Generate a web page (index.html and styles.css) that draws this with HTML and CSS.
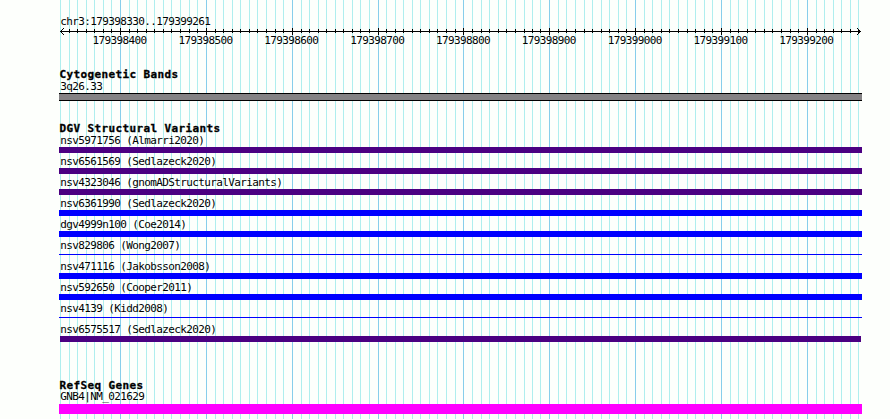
FILE: index.html
```
<!DOCTYPE html>
<html lang="en">
<head>
    <meta charset="UTF-8">
    <title>chr3:179398330..179399261</title>
    <link rel="stylesheet" href="styles.css">
</head>
<body>
    <div class="browser">
        <svg class="grid" id="grid" width="890" height="419" shape-rendering="crispEdges"></svg>

        <div class="ruler">
            <div class="label">chr3:179398330..179399261</div>
            <svg class="axis" id="axis" width="890" height="8" shape-rendering="crispEdges"></svg>
            <div class="numbers">
                <span>179398400</span>
                <span>179398500</span>
                <span>179398600</span>
                <span>179398700</span>
                <span>179398800</span>
                <span>179398900</span>
                <span>179399000</span>
                <span>179399100</span>
                <span>179399200</span>
            </div>
        </div>

        <div class="track cytobands">
            <h2>Cytogenetic Bands</h2>
            <div class="label">3q26.33</div>
            <div class="band"></div>
        </div>

        <div class="track variants">
            <h2>DGV Structural Variants</h2>
            <div class="feature"><div class="label">nsv5971756 (Almarri2020)</div><div class="bar complex"></div></div>
            <div class="feature"><div class="label">nsv6561569 (Sedlazeck2020)</div><div class="bar complex"></div></div>
            <div class="feature"><div class="label">nsv4323046 (gnomADStructuralVariants)</div><div class="bar complex"></div></div>
            <div class="feature"><div class="label">nsv6361990 (Sedlazeck2020)</div><div class="bar gain"></div></div>
            <div class="feature"><div class="label">dgv4999n100 (Coe2014)</div><div class="bar gain"></div></div>
            <div class="feature"><div class="label">nsv829806 (Wong2007)</div><div class="bar gain thin"></div></div>
            <div class="feature"><div class="label">nsv471116 (Jakobsson2008)</div><div class="bar gain"></div></div>
            <div class="feature"><div class="label">nsv592650 (Cooper2011)</div><div class="bar gain"></div></div>
            <div class="feature"><div class="label">nsv4139 (Kidd2008)</div><div class="bar gain thin"></div></div>
            <div class="feature"><div class="label">nsv6575517 (Sedlazeck2020)</div><div class="bar complex inset"></div></div>
        </div>

        <div class="track genes">
            <h2>RefSeq Genes</h2>
            <div class="label">GNB4|NM_021629</div>
            <div class="gene"></div>
        </div>
    </div>

    <script src="grid.js"></script>
</body>
</html>
```
FILE: styles.css
```
body {
    margin: 0;
    background-color: #fdfffc;
    color: #000;
    font-family: "DejaVu Sans Mono", monospace;
    font-size: 11px;
    line-height: 12px;
}
.browser {
    position: relative;
    width: 890px;
    height: 419px;
    overflow: hidden;
}
.grid {
    position: absolute;
    top: 0;
    left: 0;
}
.minor {
    fill: #afeeee;
}
.major {
    fill: #87ceeb;
}
.ruler, .track {
    position: relative;
}
.ruler {
    height: 68px;
    padding-top: 15px;
    box-sizing: border-box;
}
.label {
    height: 12px;
    padding-left: 60.2px;
    line-height: 14px;
    letter-spacing: -0.62px;
    white-space: nowrap;
}
.axis {
    display: block;
    margin-top: 1px;
}
.numbers {
    display: grid;
    grid-template-columns: repeat(9, 85.85px);
    margin-top: -1px;
    padding-left: 76.7px;
    letter-spacing: -0.62px;
}
.numbers span {
    text-align: center;
}
h2 {
    height: 12px;
    margin: 0;
    padding-left: 59.4px;
    font-size: 11px;
    font-weight: bold;
    line-height: 13px;
    letter-spacing: 0.38px;
    -webkit-text-stroke: 0.3px #000;
}
.cytobands {
    height: 54px;
}
.band {
    box-sizing: border-box;
    width: 803px;
    height: 8px;
    margin: 1px 0 0 59px;
    border: solid #000;
    border-width: 1px 0;
    background-color: #848284;
}
.variants {
    height: 257px;
}
.feature {
    height: 21px;
}
.bar {
    width: 803px;
    height: 6px;
    margin: 1px 0 0 59px;
}
.complex {
    background-color: #4b0082;
}
.gain {
    background-color: #0000ff;
}
.thin {
    height: 1px;
    margin-top: 3px;
}
.inset {
    width: 801px;
    margin-left: 60px;
}
/* keeps the underscore clear of the gene bar */
.genes .label {
    line-height: 12px;
}
.gene {
    width: 803px;
    height: 10px;
    margin: 1px 0 0 59px;
    background-color: #ff00ff;
}
```
FILE: grid.js
```
// one column every 10 bp, from 179398330
const columns = [
    60, 69, 77, 86, 94, 103, 111,
    120, 129, 137, 146, 154, 163, 171, 180, 189, 197,
    206, 215, 223, 232, 240, 249, 257, 266, 275, 283,
    292, 301, 309, 318, 326, 335, 343, 352, 360, 369,
    378, 386, 395, 403, 412, 420, 429, 437, 446, 455,
    463, 472, 481, 489, 498, 506, 515, 524, 532, 540,
    549, 558, 566, 575, 584, 592, 601, 609, 618, 626,
    635, 644, 652, 661, 669, 678, 687, 695, 704, 712,
    721, 730, 738, 747, 755, 764, 772, 781, 790, 798,
    807, 816, 824, 833, 841, 850, 858
];

let grid = '';
let axis = '<rect x="60" y="3" width="801" height="1"/>';

columns.forEach((x, i) => {
    const major = i % 10 === 7;
    grid += `<rect class="${major ? 'major' : 'minor'}" x="${x}" y="0" width="1" height="419"/>`;
    if (i > 0) {
        axis += `<rect x="${x}" y="${major ? 0 : 1}" width="1" height="${major ? 7 : 4}"/>`;
    }
});

// arrow heads, one pixel per step
for (let i = 1; i <= 3; i++) {
    axis += `<rect x="${60 + i}" y="${3 - i}" width="1" height="1"/><rect x="${60 + i}" y="${3 + i}" width="1" height="1"/>`;
    axis += `<rect x="${860 - i}" y="${3 - i}" width="1" height="1"/><rect x="${860 - i}" y="${3 + i}" width="1" height="1"/>`;
}

document.getElementById('grid').innerHTML = grid;
document.getElementById('axis').innerHTML = axis;
```
